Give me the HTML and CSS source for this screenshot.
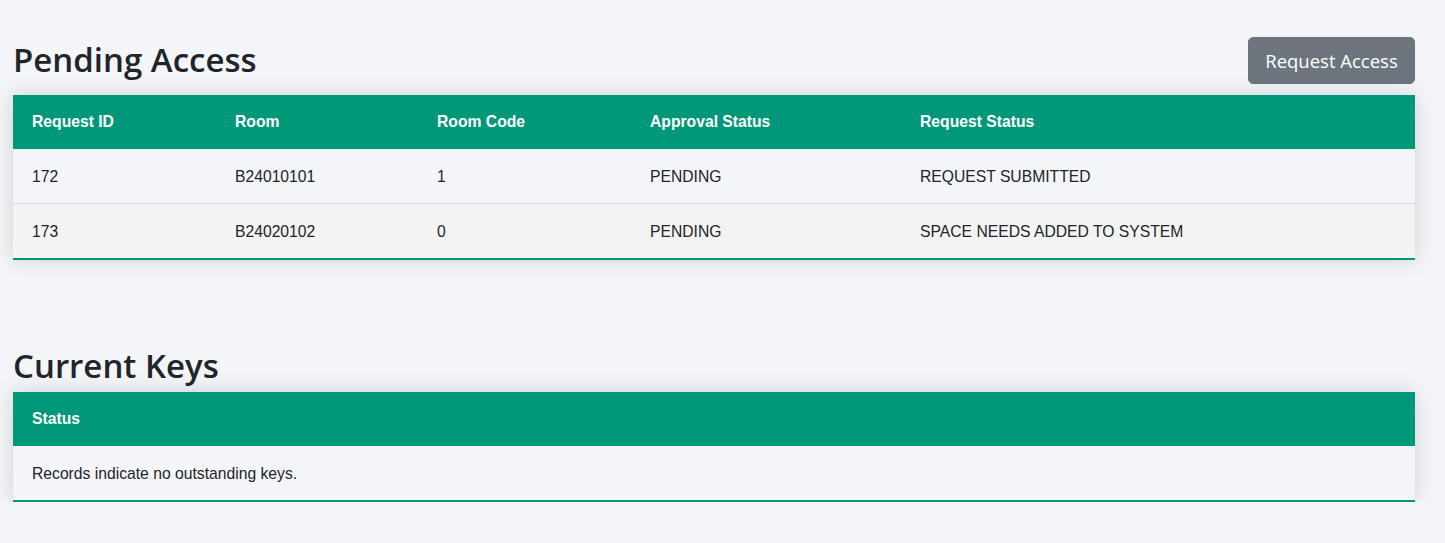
FILE: index.html
```html
<!DOCTYPE html>
<html lang="en">
<head>
<meta charset="utf-8">
<title>Access</title>
<link rel="stylesheet" href="styles.css">
</head>
<body>
<main class="page">
  <section class="section section-pending">
    <div class="section-head">
      <h2 class="title">Pending Access</h2>
      <button class="btn-request" type="button">Request Access</button>
    </div>
    <table class="data-table">
      <colgroup>
        <col class="c1"><col class="c2"><col class="c3"><col class="c4"><col class="c5">
      </colgroup>
      <thead>
        <tr>
          <th>Request ID</th>
          <th>Room</th>
          <th>Room Code</th>
          <th>Approval Status</th>
          <th>Request Status</th>
        </tr>
      </thead>
      <tbody>
        <tr>
          <td>172</td>
          <td>B24010101</td>
          <td>1</td>
          <td>PENDING</td>
          <td>REQUEST SUBMITTED</td>
        </tr>
        <tr>
          <td>173</td>
          <td>B24020102</td>
          <td>0</td>
          <td>PENDING</td>
          <td>SPACE NEEDS ADDED TO SYSTEM</td>
        </tr>
      </tbody>
    </table>
  </section>

  <section class="section section-keys">
    <div class="section-head">
      <h2 class="title">Current Keys</h2>
    </div>
    <table class="data-table">
      <thead>
        <tr><th>Status</th></tr>
      </thead>
      <tbody>
        <tr><td>Records indicate no outstanding keys.</td></tr>
      </tbody>
    </table>
  </section>
</main>
</body>
</html>
```

FILE: styles.css
```css
html, body {
  margin: 0;
  padding: 0;
  background: #f4f5f9;
}

.page {
  padding: 37px 30px 0 13px;
  font-family: "Liberation Sans", Arial, sans-serif;
  color: #212529;
}

.section-head {
  display: flex;
  justify-content: space-between;
  align-items: flex-start;
}

.title {
  margin: 3px 0 0 0;
  font-family: "Open Sans", "Noto Sans", sans-serif;
  font-weight: 600;
  font-size: 33px;
  line-height: 40px;
  color: #212529;
}

.btn-request {
  display: flex;
  align-items: center;
  justify-content: center;
  white-space: nowrap;
  font-family: "Open Sans", "Noto Sans", sans-serif;
  font-size: 18.5px;
  line-height: 27px;
  color: #fff;
  background: #6c757d;
  border: 1px solid #6c757d;
  border-radius: 5px;
  padding: 0 0 1px 0;
  width: 167px;
  height: 47px;
  cursor: pointer;
}

.data-table {
  width: 100%;
  border-collapse: collapse;
  margin-top: 11px;
  font-size: 15.7px;
  box-shadow: 0 0 20px rgba(0, 0, 0, 0.15);
  background: #f4f5f9;
}

.section-keys {
  margin-top: 85px;
}

.section-keys .title {
  margin-top: 1px;
}

.section-keys .data-table {
  margin-top: 6px;
}

.data-table th,
.data-table td {
  text-align: left;
  padding: 0 19px;
  height: 54px;
}

.data-table td {
  padding-top: 1px;
  height: 53px;
}

.data-table thead tr {
  background: #009879;
  color: #fff;
}

.data-table th {
  font-weight: bold;
}

.data-table tbody tr {
  border-bottom: 1px solid #dddddd;
}

.data-table tbody tr:nth-of-type(even) {
  background: #f3f3f3;
}

.data-table tbody tr:last-of-type {
  border-bottom: 2px solid #009879;
}

.c1 { width: 203px; }
.c2 { width: 202px; }
.c3 { width: 213px; }
.c4 { width: 270px; }
.c5 { width: auto; }
```
